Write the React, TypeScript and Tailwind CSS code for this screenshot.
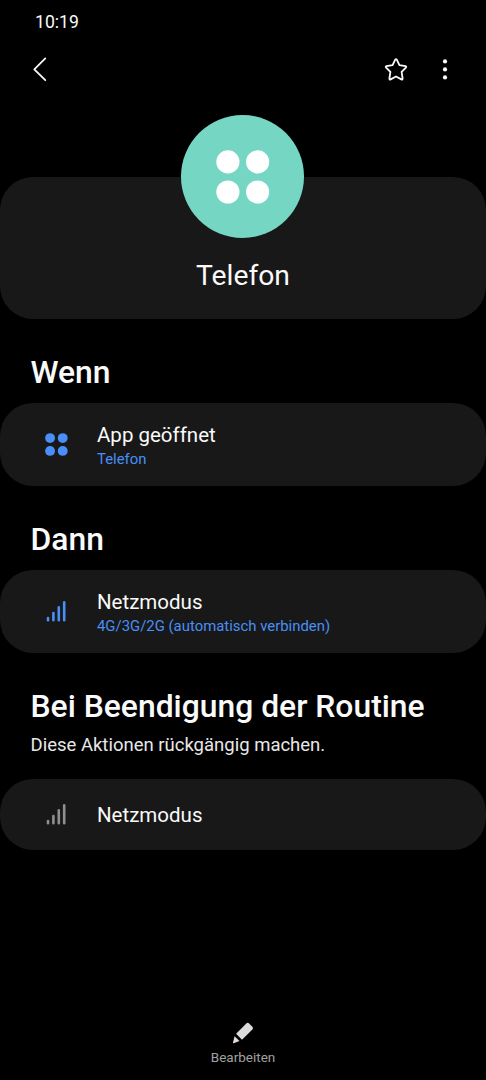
import type { ReactNode } from "react";

type RowProps = {
  icon: ReactNode;
  title: string;
  subtitle?: string;
};

function DotsIcon({ className }: { className: string }) {
  return (
    <svg viewBox="0 0 54 54" fill="currentColor" className={className}>
      <circle cx="11.9" cy="11.9" r="11.6" />
      <circle cx="41.6" cy="11.9" r="11.6" />
      <circle cx="11.9" cy="42" r="11.6" />
      <circle cx="41.6" cy="42" r="11.6" />
    </svg>
  );
}

function SignalIcon({ className }: { className: string }) {
  return (
    <svg
      viewBox="0 0 20 22"
      fill="none"
      stroke="currentColor"
      strokeWidth="2.6"
      strokeLinecap="round"
      className={`w-5 h-[22px] ${className}`}
    >
      <path d="M2 17v2.3M7.4 12v7.3M12.8 6.4v12.9M18.2 1.4v17.9" />
    </svg>
  );
}

function Row({ icon, title, subtitle }: RowProps) {
  return (
    <div
      className={`flex items-center rounded-[33px] bg-[#181818] ${
        subtitle ? "h-[83px]" : "h-[71px]"
      }`}
    >
      <div className="w-[97px] pl-[15px] flex justify-center">{icon}</div>
      <div className={subtitle ? "pt-1" : ""}>
        <p className="text-[20.5px] leading-6 text-[#fafafa]">{title}</p>
        {subtitle && (
          <p className="text-[14.9px] leading-6 text-[#498ff7]">{subtitle}</p>
        )}
      </div>
    </div>
  );
}

function Heading({ children }: { children: ReactNode }) {
  return (
    <h2 className="pl-[30.5px] text-[31.85px] leading-10 font-medium text-[#fafafa]">
      {children}
    </h2>
  );
}

export default function App() {
  return (
    <div className="h-[1080px] w-[486px] flex flex-col overflow-hidden bg-black text-[#fafafa] font-['Roboto',sans-serif]">
      <div className="h-[41px] pt-[3px] pl-[35px] flex items-center text-[17.6px]">10:19</div>

      <header className="h-[56px] flex items-center justify-between pl-[32px] pr-[38px]">
        <button aria-label="Zurück">
          <svg width="16" height="26" viewBox="0 0 16 26" fill="none" stroke="currentColor" strokeWidth="1.8" strokeLinecap="round" strokeLinejoin="round">
            <path d="M13.3 2.4L2.3 13.3l11 10.9" />
          </svg>
        </button>
        <div className="flex items-center gap-[34px]">
          <button aria-label="Favorit">
            <svg width="24" height="24" viewBox="0 0 24 24" fill="none" stroke="currentColor" strokeWidth="1.8" strokeLinejoin="round">
              <path d="M11.2 2.7Q12 1.5 12.8 2.7L15.4 8.1L21.5 9.1Q22.8 9.5 21.9 10.6L17.6 14.9L18.6 21.5Q18.6 22.9 17.4 22.4L12 19.5L6.6 22.4Q5.4 22.9 5.4 21.5L6.4 14.9L2.1 10.6Q1.2 9.5 2.5 9.1L8.6 8.1Z" />
            </svg>
          </button>
          <button aria-label="Mehr">
            <svg width="6" height="24" viewBox="0 0 6 24" fill="currentColor">
              <circle cx="3" cy="4.4" r="2.1" />
              <circle cx="3" cy="12.4" r="2.1" />
              <circle cx="3" cy="20.4" r="2.1" />
            </svg>
          </button>
        </div>
      </header>

      {/* Routine icon and name, icon overlaps the top of the card */}
      <section className="mt-[80px] h-[142px] rounded-[33px] bg-[#181818] flex flex-col items-center">
        <div className="-mt-[62px] mr-px size-[123px] shrink-0 rounded-full bg-[#76d6c4] flex items-center justify-center">
          <DotsIcon className="size-[54px] text-white" />
        </div>
        <h1 className="mt-5 text-[28.3px] leading-9">Telefon</h1>
      </section>

      <section className="mt-[33px]">
        <Heading>Wenn</Heading>
        <div className="mt-[11px]">
          <Row
            icon={<DotsIcon className="size-[23px] text-[#498ff7]" />}
            title="App geöffnet"
            subtitle="Telefon"
          />
        </div>
      </section>

      <section className="mt-[33px]">
        <Heading>Dann</Heading>
        <div className="mt-[11px]">
          <Row
            icon={<SignalIcon className="text-[#498ff7]" />}
            title="Netzmodus"
            subtitle="4G/3G/2G (automatisch verbinden)"
          />
        </div>
      </section>

      <section className="mt-[33px]">
        <Heading>Bei Beendigung der Routine</Heading>
        <p className="mt-[7px] mb-[22px] pl-[30.5px] text-[18.5px] leading-6 text-[#e8e8e8]">
          Diese Aktionen rückgängig machen.
        </p>
        <Row icon={<SignalIcon className="text-[#8f8f8f]" />} title="Netzmodus" />
      </section>

      <button className="mt-auto mb-[15px] self-center flex flex-col items-center gap-[5px] text-[#a0a0a0]">
        <svg width="22" height="22" viewBox="0 0 22 22" fill="#dcdcdc">
          <path d="M14.3 1.5a2 2 0 0 1 2.8 0l3.3 3.2a2 2 0 0 1 0 2.8l-10.4 10.2-5.9-6z" />
          <path d="M2.6 14.2l4.9 4.9-5.7 2.1q-1 .2-.8-.8z" />
        </svg>
        <span className="text-[13.5px] leading-4">Bearbeiten</span>
      </button>
    </div>
  );
}
